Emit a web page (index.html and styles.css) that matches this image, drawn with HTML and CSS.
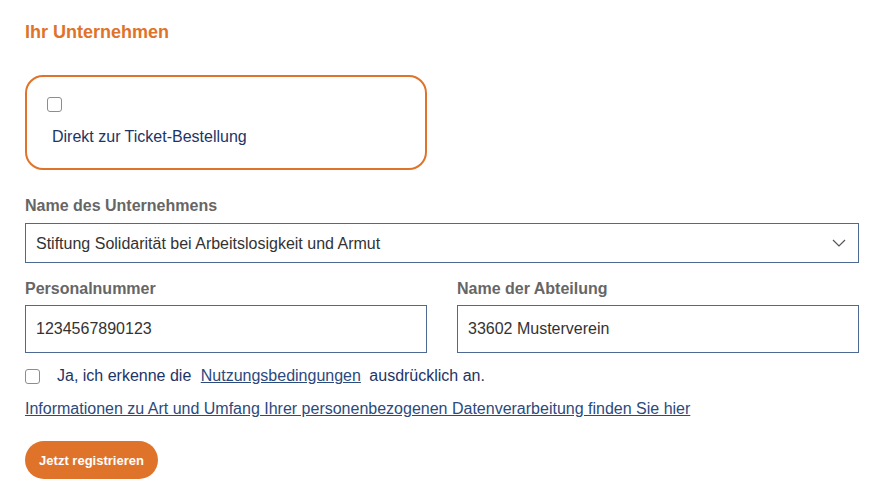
FILE: index.html
```html
<!DOCTYPE html>
<html lang="de">
<head>
    <meta charset="UTF-8">
    <meta name="viewport" content="width=device-width, initial-scale=1.0">
    <title>Registrierung</title>
    <link rel="stylesheet" href="styles.css">
</head>
<body>
    <div class="page">
        <h2 class="section-title">Ihr Unternehmen</h2>

        <!-- Direktbestellung -->
        <div class="ticket-box">
            <input type="checkbox" id="direct-order" class="check">
            <label for="direct-order" class="ticket-label">Direkt zur Ticket-Bestellung</label>
        </div>

        <div class="field">
            <label for="company" class="field-label">Name des Unternehmens</label>
            <div class="select-wrap">
                <select id="company" class="control">
                    <option>Stiftung Solidarität bei Arbeitslosigkeit und Armut</option>
                </select>
                <svg class="chevron" width="14" height="8" viewBox="0 0 14 8">
                    <path d="M1 1 L7 7 L13 1" fill="none" stroke="#555" stroke-width="1.2"/>
                </svg>
            </div>
        </div>

        <div class="field-row">
            <div class="field">
                <label for="staff-no" class="field-label">Personalnummer</label>
                <input type="text" id="staff-no" class="control tall" value="1234567890123">
            </div>
            <div class="field">
                <label for="department" class="field-label">Name der Abteilung</label>
                <input type="text" id="department" class="control tall" value="33602 Musterverein">
            </div>
        </div>

        <div class="terms">
            <input type="checkbox" id="terms" class="check">
            <label for="terms">Ja, ich erkenne die <a href="#" class="link">Nutzungsbedingungen</a> ausdrücklich an.</label>
        </div>

        <p class="privacy"><a href="#" class="link">Informationen zu Art und Umfang Ihrer personenbezogenen Datenverarbeitung finden Sie hier</a></p>

        <button class="submit">Jetzt registrieren</button>
    </div>
</body>
</html>
```

FILE: styles.css
```css
body {
    margin: 0;
    font-family: "Liberation Sans", Arial, sans-serif;
    background: #fff;
    color: #1e3466;
}
.page {
    padding: 0 25px;
    width: 834px;
}
.section-title {
    margin: 22px 0 0;
    font-size: 18px;
    line-height: 20px;
    font-weight: bold;
    color: #e0732a;
}
.ticket-box {
    margin-top: 33px;
    border: 2px solid #e0732a;
    border-radius: 18px;
    padding: 20px 0 21px 20px;
    box-sizing: border-box;
    width: 402px;
}
.check {
    appearance: none;
    -webkit-appearance: none;
    width: 15px;
    height: 15px;
    margin: 0;
    border: 1px solid #8d8d8d;
    border-radius: 3px;
    background: #fff;
    box-sizing: border-box;
}
.ticket-box .check {
    display: block;
}
.ticket-label {
    display: block;
    margin: 15px 0 0 5px;
    font-size: 16px;
    line-height: 20px;
}
.field {
    margin-top: 26px;
}
.field-label {
    display: block;
    font-size: 16px;
    line-height: 20px;
    font-weight: bold;
    color: #666;
    margin-bottom: 7px;
}
.select-wrap {
    position: relative;
}
.control {
    display: block;
    width: 100%;
    height: 40px;
    box-sizing: border-box;
    border: 1px solid #4d6a94;
    border-radius: 0;
    background: #fff;
    padding: 0 10px;
    font-family: inherit;
    font-size: 16px;
    color: #333;
    appearance: none;
    -webkit-appearance: none;
}
.control.tall {
    height: 48px;
}
.chevron {
    position: absolute;
    right: 13px;
    top: 16px;
}
.field-row {
    display: grid;
    grid-template-columns: 1fr 1fr;
    column-gap: 30px;
}
.field-row .field {
    margin-top: 16px;
}
.field-row .field-label {
    margin-bottom: 6px;
}
.terms {
    display: flex;
    align-items: center;
    gap: 17px;
    margin-top: 13px;
    font-size: 16px;
    line-height: 20px;
}
.link {
    color: #2b4a7d;
    text-decoration: underline;
}
.terms .link {
    margin: 0 4px 0 5px;
}
.privacy {
    margin: 13px 0 0;
    font-size: 16px;
    line-height: 20px;
}
.submit {
    margin-top: 22px;
    width: 133px;
    height: 38px;
    border: none;
    border-radius: 19px;
    background: #e0732a;
    color: #fff;
    font-family: inherit;
    font-size: 13px;
    font-weight: bold;
    padding: 0;
}
```
